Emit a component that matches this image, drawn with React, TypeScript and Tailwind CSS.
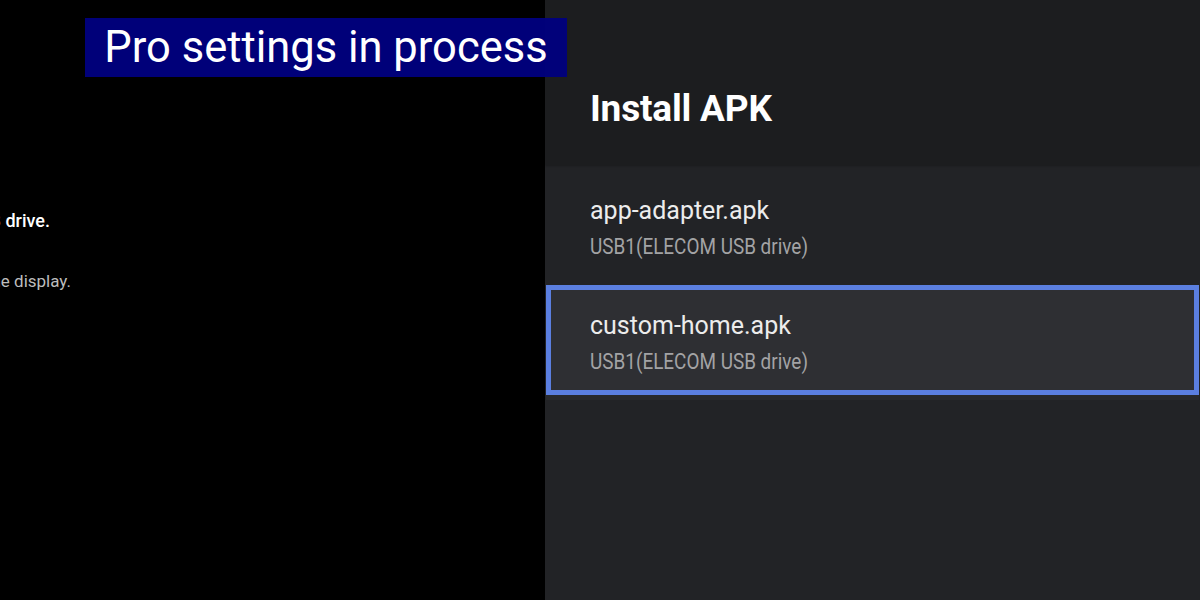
import React from 'react';

const items = [
  { name: 'app-adapter.apk', source: 'USB1(ELECOM USB drive)', selected: false },
  { name: 'custom-home.apk', source: 'USB1(ELECOM USB drive)', selected: true },
];

const App: React.FC = () => {
  return (
    <div className="relative w-[1200px] h-[600px] flex overflow-hidden bg-black font-['Roboto','Noto_Sans',sans-serif]">
      {/* left pane, text is cut off by the screen edge */}
      <div className="w-[545px] shrink-0 bg-black flex flex-col">
        <div className="h-[208px]" />
        <div className="w-[50px] flex justify-end whitespace-nowrap text-[18px] font-medium text-white leading-[26px]">
          Install an app from an APK file on a USB drive.
        </div>
        <div className="h-[35px]" />
        <div className="w-[71px] flex justify-end whitespace-nowrap text-[17px] text-[#bdbdbd] leading-[24px]">
          The app will be installed to the display.
        </div>
      </div>

      {/* right side panel */}
      <div className="flex-1 flex flex-col bg-[#222326]">
        <div className="h-[165px] shrink-0 bg-[#1c1d1f] pl-[45px] pt-[85px] shadow-[0_1px_2px_rgba(0,0,0,0.25)]">
          <h1 className="text-[37px] font-bold text-white leading-[48px] tracking-[-0.2px]">Install APK</h1>
        </div>
        <div className="flex flex-col gap-[5px] pt-[5px] pl-px pr-px">
          {items.map((item) => (
            <div
              key={item.name}
              className={
                item.selected
                  ? 'h-[110px] border-[5px] border-[#5b7fe0] bg-[#2e2f33] pl-[39px] pt-[20px] shadow-[0_5px_0_#28292c]'
                  : 'h-[110px] border-[5px] border-transparent pl-[39px] pt-[20px]'
              }
            >
              <div className="text-[25px] text-[#ececec] leading-[32px]">{item.name}</div>
              <div className="mt-[6px] text-[22px] text-[#a3a3a5] leading-[28px] whitespace-nowrap inline-block origin-left scale-x-[0.86]">
                {item.source}
              </div>
            </div>
          ))}
        </div>
      </div>

      {/* status banner over everything */}
      <div className="absolute left-[85px] top-[18px] h-[59px] w-[482px] bg-[#00007f]/95 flex items-center justify-center">
        <span className="text-[43.5px] text-white leading-none whitespace-nowrap">Pro settings in process</span>
      </div>
    </div>
  );
};

export default App;
